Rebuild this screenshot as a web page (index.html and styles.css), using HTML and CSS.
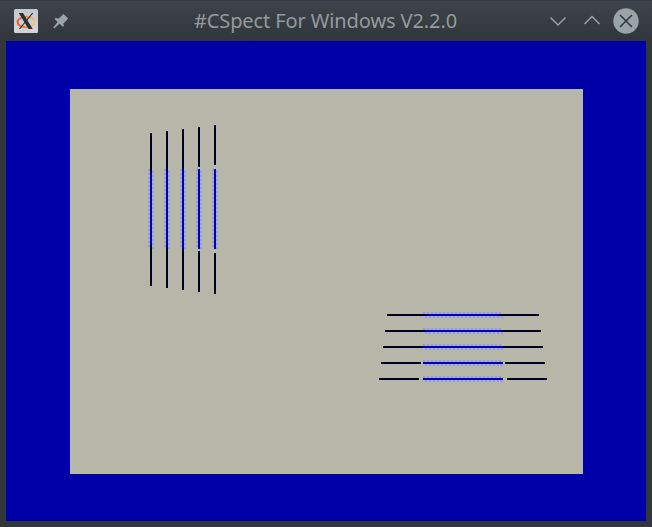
FILE: index.html
```
<!DOCTYPE html>
<html lang="en">
<head>
<meta charset="utf-8">
<title>#CSpect For Windows V2.2.0</title>
<link rel="stylesheet" href="styles.css">
</head>
<body>
<div class="window">
  <header class="titlebar">
    <div class="left">
      <svg class="app-icon" width="24" height="24" viewBox="0 0 24 24">
        <defs>
          <linearGradient id="tile" x1="0" y1="0" x2="0" y2="1"><stop offset="0" stop-color="#c3c8cc"/><stop offset="1" stop-color="#d2d6d9"/></linearGradient>
          <linearGradient id="ring" x1="0" y1="0" x2="1" y2="0"><stop offset="0" stop-color="#ee5822"/><stop offset=".5" stop-color="#f08a42"/><stop offset="1" stop-color="#f3c47c"/></linearGradient>
        </defs>
        <rect width="24" height="24" rx="1.5" fill="url(#tile)"/>
        <ellipse cx="12.2" cy="13" rx="8.6" ry="5.3" fill="none" stroke="url(#ring)" stroke-width="1.9"/>
        <path d="M4.8 4H9L18.7 20H14.5Z" fill="#2b3034"/>
        <path d="M18 4H19.4L6.2 20H4.8Z" fill="#2b3034"/>
      </svg>
      <svg width="18" height="18" viewBox="0 0 18 18">
        <path d="M11.5 2L16.2 6.5L14.7 8.3L11.3 11.8L12 14L10.7 14.6L7.5 11.7L2.3 16.4L1.2 15.4L5.6 9.9L2.6 7L3.8 5.8L6.3 6.7Z" fill="#9aa3a5"/>
      </svg>
    </div>
    <h1>#CSpect For Windows V2.2.0</h1>
    <div class="buttons">
      <svg width="18" height="26" viewBox="0 0 18 26"><path d="M1.5 9.5L9 17L16.5 9.5"/></svg>
      <svg width="18" height="26" viewBox="0 0 18 26"><path d="M1.5 16L9 8.5L16.5 16"/></svg>
      <svg width="26" height="26" viewBox="0 0 26 26"><circle cx="13" cy="13" r="12.7"/><path class="cross" d="M7 7L19 19M19 7L7 19"/></svg>
    </div>
  </header>
  <main class="border-area">
    <svg class="paper" width="513" height="385" viewBox="70 89 513 385" shape-rendering="crispEdges">
      <g class="blue">
        <path d="M151 169V249M167 169V249M183 169V249M199 169V249M215 169V249"/>
        <path d="M423 315H503M423 331H503M423 347H503M423 363H503M423 379H503"/>
      </g>
      <g class="dots">
        <path d="M149 169V247M165 169V247M181 169V247M197 169V247M213 169V247"/>
        <path d="M153 171V249M169 171V249M185 171V249M201 171V249M217 171V249"/>
        <path d="M423 313H501M423 329H501M423 345H501M423 361H501M423 377H501"/>
        <path d="M425 317H503M425 333H503M425 349H503M425 365H503M425 381H503"/>
      </g>
      <g class="dark">
        <path d="M151 133V173M167 131V171M183 129V169M199 127V167M215 125V165"/>
        <path d="M151 245V286M167 247V288M183 249V290M199 251V292M215 253V294"/>
        <path d="M387 315H427M385 331H425M383 347H423M381 363H421M379 379H419"/>
        <path d="M499 315H539M501 331H541M503 347H543M505 363H545M507 379H547"/>
      </g>
    </svg>
  </main>
</div>
</body>
</html>
```

FILE: styles.css
```
* {
  box-sizing: border-box;
}

body {
  margin: 0;
  background: #31363b;
}

.window {
  width: 652px;
  height: 527px;
  display: flex;
  flex-direction: column;
  padding: 0 6px 6px;
  background: #31373a;
}

.titlebar {
  flex: none;
  height: 41px;
  margin: 0 -6px;
  padding: 0 13px 2px 14px;
  display: grid;
  grid-template-columns: 100px 1fr 100px;
  align-items: center;
  border-top: 1px solid #33393c;
  background: linear-gradient(#3e444b, #31363b);
}

.left,
.buttons {
  display: flex;
  align-items: center;
}

.left {
  gap: 14px;
}

.buttons {
  justify-content: flex-end;
  gap: 16px;
}

.buttons svg:last-child {
  margin-left: -4px;
}

.buttons path {
  fill: none;
  stroke: #9aa3a5;
  stroke-width: 1.5;
}

.buttons circle {
  fill: #9aa3a5;
}

.buttons .cross {
  stroke: #31363b;
}

h1 {
  margin: 0;
  padding: 1px 2px 0 0;
  font: 400 20px/38px "Noto Sans", sans-serif;
  letter-spacing: -0.1px;
  color: #929b9d;
  text-align: center;
  white-space: nowrap;
}

.border-area {
  flex: 1;
  padding: 48px 64px 47px;
  background: #0000a9;
}

.paper {
  display: block;
  background: #b6b6a9;
}

.paper path {
  fill: none;
  stroke-width: 2;
}

.blue {
  stroke: #0000b4;
}

.dots {
  stroke: #9292ff;
  stroke-dasharray: 2 2;
}

.dark {
  stroke: #000024;
}
```
